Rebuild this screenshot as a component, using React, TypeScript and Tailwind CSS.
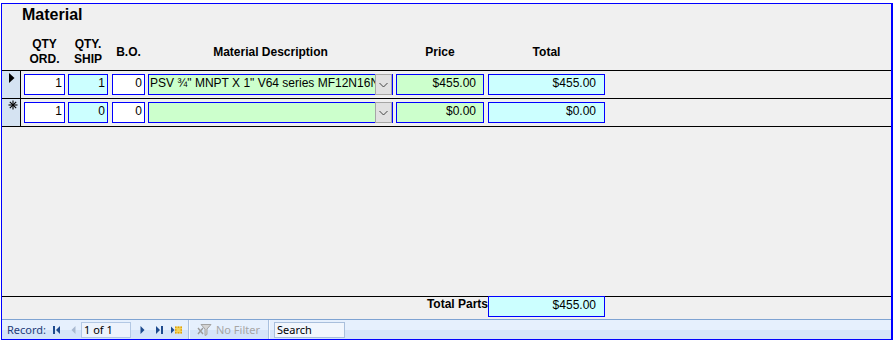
import React from "react";

const F = { fontFamily: '"Liberation Sans", Arial, sans-serif' } as const;
const NAV = { fontFamily: '"Noto Sans", "Liberation Sans", sans-serif' } as const;

function Box({
  w,
  bg,
  children,
  pr,
}: {
  w: string;
  bg: string;
  children?: React.ReactNode;
  pr: string;
}) {
  return (
    <div
      className={`${w} ${bg} ${pr} h-[21px] border border-[#0000ff] text-right text-[12px] leading-[14px] text-black whitespace-nowrap overflow-hidden pt-[1px]`}
    >
      {children}
    </div>
  );
}

function Combo({ text }: { text: string }) {
  return (
    <div className="w-[245px] h-[21px] ml-[3px] border border-[#0000ff] bg-[#ccffcc] flex">
      <div className="flex-1 overflow-hidden whitespace-nowrap text-[12px] leading-[14px] pl-[1px] pt-[1px] text-black">
        {text}
      </div>
      <div className="w-[17px] -my-px bg-[#e1e1e1] border border-[#a6a6a6] flex items-center justify-center">
        <svg width="9" height="6" viewBox="0 0 9 6">
          <path d="M0.5 1 L4.5 5 L8.5 1" fill="none" stroke="#444" strokeWidth="1" />
        </svg>
      </div>
    </div>
  );
}

function Row({
  selector,
  ord,
  ship,
  bo,
  desc,
  price,
  total,
}: {
  selector: React.ReactNode;
  ord: string;
  ship: string;
  bo: string;
  desc: string;
  price: string;
  total: string;
}) {
  return (
    <div className="flex h-[28px] border-b border-black shrink-0">
      <div className="w-[19px] border-r border-black bg-[#d5e3f2] shrink-0">{selector}</div>
      <div className="flex pt-[3px]">
        <div className="ml-[3px]">
          <Box w="w-[41px]" bg="bg-white" pr="pr-[2px]">
            {ord}
          </Box>
        </div>
        <div className="ml-[3px]">
          <Box w="w-[40px]" bg="bg-[#ccffff]" pr="pr-[2px]">
            {ship}
          </Box>
        </div>
        <div className="ml-[4px]">
          <Box w="w-[33px]" bg="bg-white" pr="pr-[2px]">
            {bo}
          </Box>
        </div>
        <Combo text={desc} />
        <div className="ml-[3px]">
          <Box w="w-[88px]" bg="bg-[#ccffcc]" pr="pr-[7px]">
            {price}
          </Box>
        </div>
        <div className="ml-[4px]">
          <Box w="w-[117px]" bg="bg-[#ccffff]" pr="pr-[8px]">
            {total}
          </Box>
        </div>
      </div>
    </div>
  );
}

const Current = (
  <div className="pl-[7px] pt-[2px]">
    <svg width="6" height="10" viewBox="0 0 6 10">
      <polygon points="0,0 5.5,5 0,10" fill="#000" />
    </svg>
  </div>
);

const NewRow = (
  <div className="pl-[6px] pt-[1px]">
    <svg width="10" height="10" viewBox="0 0 10 10">
      <g stroke="#000" strokeWidth="1.1">
        <line x1="5" y1="0.5" x2="5" y2="9.5" />
        <line x1="0.5" y1="5" x2="9.5" y2="5" />
        <line x1="1.8" y1="1.8" x2="8.2" y2="8.2" />
        <line x1="8.2" y1="1.8" x2="1.8" y2="8.2" />
      </g>
    </svg>
  </div>
);

function Sep() {
  return (
    <div className="self-stretch flex">
      <div className="w-px bg-[#a9c0de]" />
      <div className="w-px bg-[#f4f8fe]" />
    </div>
  );
}

export default function App() {
  return (
    <div className="w-[894px] h-[343px] bg-white pt-[3px] pl-[1px]" style={F}>
      <div className="w-[892px] h-[337px] border border-[#0000ff] border-r-2 bg-[#f0f0f0] flex flex-col">
        {/* header */}
        <div className="h-[67px] border-b border-black shrink-0 flex flex-col">
          <div className="pt-[2px] pl-[20px] h-[20px] text-[16px] leading-[18px] font-bold text-black">
            Material
          </div>
          <div className="mt-[13px] h-[30px] flex items-center text-[12px] leading-[15px] font-bold text-black">
            <div className="w-[19px] shrink-0" />
            <div className="ml-[3px] w-[41px] text-center">
              QTY
              <br />
              ORD.
            </div>
            <div className="ml-[3px] w-[40px] text-center">
              QTY.
              <br />
              SHIP
            </div>
            <div className="ml-[4px] w-[33px] text-center">B.O.</div>
            <div className="ml-[3px] w-[245px] text-center whitespace-nowrap">
              Material Description
            </div>
            <div className="ml-[3px] w-[88px] text-center">Price</div>
            <div className="ml-[4px] w-[117px] text-center">Total</div>
          </div>
        </div>

        <Row
          selector={Current}
          ord="1"
          ship="1"
          bo="0"
          desc={'PSV \u00BE" MNPT X 1" V64 series MF12N16N'}
          price="$455.00"
          total="$455.00"
        />
        <Row selector={NewRow} ord="1" ship="0" bo="0" desc="" price="$0.00" total="$0.00" />

        <div className="flex-1" />

        {/* footer */}
        <div className="h-[23px] border-t border-black shrink-0 flex">
          <div className="w-[486px] text-right text-[12px] leading-[14px] font-bold text-black whitespace-nowrap">
            Total Parts
          </div>
          <div className="-mt-px">
            <Box w="w-[117px]" bg="bg-[#ccffff]" pr="pr-[8px]">
              $455.00
            </Box>
          </div>
        </div>

        {/* nav bar */}
        <div
          className="h-[20px] shrink-0 border-t border-[#7fa3d2] bg-[linear-gradient(#e6f0fd_0%,#e6f0fd_52%,#d5e4f9_52%,#d5e4f9_100%)] flex items-center pl-[5px] text-[11px]"
          style={NAV}
        >
          <span className="w-[46px] text-[#1f3d7a] leading-[14px]">Record:</span>
          {/* first */}
          <svg width="7" height="8" viewBox="0 0 7 8">
            <rect x="0" y="0" width="2" height="8" fill="#1d4a8e" />
            <polygon points="7,0 3,4 7,8" fill="#1d4a8e" />
          </svg>
          {/* prev */}
          <svg className="ml-[11px]" width="5" height="8" viewBox="0 0 5 8">
            <polygon points="4.5,0 0.5,4 4.5,8" fill="#a9b9d0" />
          </svg>
          <div className="ml-[5px] w-[50px] h-[16px] border border-[#b3c8e4] bg-[#edf3fc] flex items-center pl-[2px] text-black leading-[14px]">
            1 of 1
          </div>
          {/* next */}
          <svg className="ml-[9px]" width="5" height="8" viewBox="0 0 5 8">
            <polygon points="0.5,0 4.5,4 0.5,8" fill="#1d4a8e" />
          </svg>
          {/* last */}
          <svg className="ml-[11px]" width="7" height="8" viewBox="0 0 7 8">
            <polygon points="0,0 4,4 0,8" fill="#1d4a8e" />
            <rect x="5" y="0" width="2" height="8" fill="#1d4a8e" />
          </svg>
          {/* new */}
          <svg className="ml-[8px]" width="11" height="8" viewBox="0 0 11 8">
            <polygon points="0,0.5 3.5,4 0,7.5" fill="#1d4a8e" />
            <rect x="4" y="0.5" width="7" height="7" fill="#f2d35a" />
            <g fill="#e0a010">
              <rect x="4" y="0.5" width="1.5" height="1.5" />
              <rect x="6.75" y="0.5" width="1.5" height="1.5" />
              <rect x="9.5" y="0.5" width="1.5" height="1.5" />
              <rect x="4" y="3.25" width="1.5" height="1.5" />
              <rect x="9.5" y="3.25" width="1.5" height="1.5" />
              <rect x="4" y="6" width="1.5" height="1.5" />
              <rect x="6.75" y="6" width="1.5" height="1.5" />
              <rect x="9.5" y="6" width="1.5" height="1.5" />
            </g>
          </svg>
          <div className="ml-[6px] self-stretch flex">
            <Sep />
          </div>
          {/* filter */}
          <svg className="ml-[7px]" width="15" height="13" viewBox="0 0 15 13">
            <path d="M4 1.5 H14 L10 6 V11.5 L8 12.5 V6 Z" fill="#d4d4d4" stroke="#a3a3a3" strokeWidth="1" />
            <path d="M1 5 L6 11 M6 5 L1 11" stroke="#9a9a9a" strokeWidth="1.4" />
          </svg>
          <span className="ml-[4px] w-[44px] text-[#a6a6a6] leading-[14px] whitespace-nowrap">
            No Filter
          </span>
          <div className="ml-[8px] self-stretch flex">
            <Sep />
          </div>
          <div className="ml-[4px] w-[71px] h-[16px] border border-[#a9bfdc] bg-[#f1f6fd] flex items-center pl-[2px] text-black leading-[14px]">
            Search
          </div>
        </div>
      </div>
    </div>
  );
}
